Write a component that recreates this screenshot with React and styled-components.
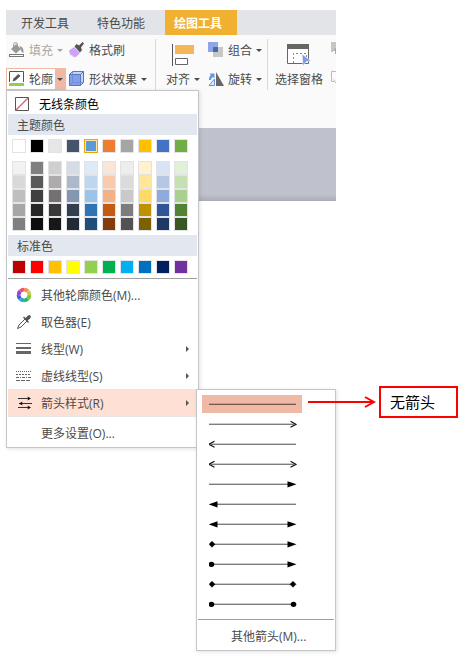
import React from 'react';
import styled, { createGlobalStyle, css } from 'styled-components';

const GlobalStyle = createGlobalStyle`
  *, *::before, *::after { box-sizing: border-box; }
  body {
    margin: 0;
    background: #fff;
    color: #4a4a4a;
    font: 12px/20px "Open Sans", "Noto Sans CJK SC", sans-serif;
  }
  button {
    margin: 0;
    padding: 0;
    border: 0;
    background: none;
    color: inherit;
    font: inherit;
    text-align: left;
    white-space: nowrap;
    cursor: pointer;
  }
  ul { margin: 0; padding: 0; list-style: none; }
  h2 { margin: 0; }
  svg { display: block; flex: none; }
`;

const Page = styled.main`
  min-height: 100vh;
  padding: 10px 128px 0 6px;
`;

const Tabs = styled.nav`
  display: flex;
  height: 25px;
  overflow: hidden;
  background: #e3e4e7;
`;

const Tab = styled.button`
  padding: 0 13px 0 15px;
  line-height: 27px;
  ${(p) => p.$active && css`
    margin-left: 7px;
    padding: 0 15px 0 9px;
    background: #f0b030;
    color: #fff;
    font-weight: 700;
  `}
`;

const Ribbon = styled.section`
  display: flex;
  height: 93px;
  padding-top: 4px;
  background: #fafafa;
`;

const ToolGrid = styled.div`
  display: grid;
  grid-template-columns: ${(p) => p.$columns};
  grid-template-rows: 22px 22px;
  row-gap: 7px;
  align-content: start;
`;

const Separator = styled.div`
  width: 1px;
  height: 51px;
  background: #d8d9dc;
`;

const Label = styled.span`
  display: block;
  padding-top: 2px;
`;

const Tool = styled.button`
  display: flex;
  align-items: center;
  gap: 4px;
  padding-left: 3px;
  color: ${(p) => (p.disabled ? '#a8a8a8' : '#4a4a4a')};
`;

const LargeTool = styled.button`
  display: grid;
  grid-template-rows: 24px 22px;
  align-content: start;
  justify-items: center;
  width: ${(p) => p.$width};
  padding: 5px 0 0 ${(p) => p.$indent || '0'};
`;

const LargeLabel = styled.span`
  display: flex;
  align-items: center;
  gap: 4px;
`;

const Caret = styled.span`
  border: 3px solid transparent;
  border-top-color: currentColor;
  border-bottom: 0;
`;

const Split = styled.div`
  position: relative;
  display: flex;
  width: 60px;
  border: 1px solid #f0b9a6;
  background: #fff;
`;

const SplitMain = styled.button`
  display: flex;
  flex: 1;
  align-items: center;
  gap: 4px;
  padding-left: 2px;
`;

const SplitCaret = styled.button`
  display: grid;
  place-items: center;
  width: 10px;
  background: #f0b9a6;
`;

const CutTools = styled.div`
  display: grid;
  flex: 1;
  grid-template-rows: 22px 22px;
  row-gap: 7px;
  align-content: start;
  align-items: center;
  justify-content: end;
`;

const Canvas = styled.div`
  height: 73px;
  border-bottom: 1px solid #a9abb6;
  background: linear-gradient(#bfc2cc 92%, #adafb9);
`;

const Popup = styled.div`
  position: absolute;
  z-index: 2;
  border: 1px solid #c5c6c8;
  background: #fff;
  box-shadow: 1px 1px 4px rgba(0, 0, 0, 0.12);
`;

const Menu = styled(Popup)`
  top: 21px;
  left: -1px;
  width: 193px;
  padding: 1px;
`;

const NoLine = styled.button`
  display: flex;
  align-items: center;
  gap: 10px;
  width: 100%;
  height: 22px;
  padding: 1px 0 0 7px;
  color: #000;
`;

const Heading = styled.h2`
  height: 21px;
  padding-left: 9px;
  background: #e3e7ef;
  font-size: 12px;
  font-weight: 400;
  line-height: 23px;
`;

const Swatches = styled.div`
  display: grid;
  grid-template-columns: repeat(10, 14px);
  column-gap: 4px;
  padding: 4px;
`;

const Swatch = styled.button`
  height: 14px;
  border: 1px solid #e2e3e7;
  background: ${(p) => p.$color};
  ${(p) => p.$selected && css`
    border-color: #f2a100;
    box-shadow: inset 0 0 0 1px #ffe5a0;
  `}
`;

const Rule = styled.div`
  height: 1px;
  margin-bottom: 2px;
  background: ${(p) => (p.$light ? '#e6e6e6' : '#a0a0a0')};
`;

const MenuRow = styled.li`
  position: relative;
`;

const MenuItem = styled.button`
  display: grid;
  grid-template-columns: 16px 1fr auto;
  column-gap: 9px;
  align-items: center;
  width: 100%;
  height: 27px;
  padding: 0 8px;
  background: ${(p) => (p.$active ? '#fee1d4' : 'none')};
`;

const SideCaret = styled.span`
  border: 3px solid transparent;
  border-left-color: #555;
  border-right: 0;
`;

const Submenu = styled(Popup)`
  top: 0;
  left: 100%;
  width: 140px;
  margin-left: -1px;
  padding: 5px 1px 1px;
`;

const ArrowList = styled.ul`
  display: grid;
  gap: 2px;
  padding: 0 32px 6px 4px;
`;

const ArrowRow = styled.li`
  position: relative;
`;

const ArrowButton = styled.button`
  display: block;
  width: 100%;
  height: 18px;
  padding-left: 7px;
  background: ${(p) => (p.$active ? '#f0b9a6' : 'none')};
`;

const MoreArrows = styled.button`
  width: 100%;
  height: 27px;
  padding-left: 33px;
`;

const Callout = styled.div`
  position: absolute;
  top: -9px;
  left: 100%;
  display: flex;
  align-items: center;
  gap: 3px;
  margin-left: 6px;
`;

const CalloutBox = styled.div`
  width: 79px;
  height: 32px;
  padding-left: 9px;
  border: 2px solid #f00;
  background: #fff;
  color: #000;
  font: 15px/28px "Noto Sans CJK SC", sans-serif;
`;

const THEME = ['#ffffff', '#000000', '#e7e6e6', '#44546a', '#5b9bd5', '#ed7d31', '#a5a5a5', '#ffc000', '#4472c4', '#70ad47'];
const SHADES = [
  ['#f2f2f2', '#7f7f7f', '#d0cece', '#d6dce5', '#deebf7', '#fbe5d6', '#ededed', '#fff2cc', '#dae3f3', '#e2f0d9'],
  ['#d9d9d9', '#595959', '#afabab', '#adb9ca', '#bdd7ee', '#f8cbad', '#dbdbdb', '#ffe699', '#b4c7e7', '#c5e0b4'],
  ['#bfbfbf', '#404040', '#767171', '#8497b0', '#9dc3e6', '#f4b183', '#c9c9c9', '#ffd966', '#8faadc', '#a9d18e'],
  ['#a6a6a6', '#262626', '#3b3838', '#333f50', '#2e75b6', '#c55a11', '#7c7c7c', '#bf9000', '#2f5597', '#548235'],
  ['#7f7f7f', '#0d0d0d', '#181717', '#222a35', '#1f4e79', '#843c0c', '#525252', '#7f6000', '#203864', '#385723'],
];
const STANDARD = ['#c00000', '#ff0000', '#ffc000', '#ffff00', '#92d050', '#00b050', '#00b0f0', '#0070c0', '#002060', '#7030a0'];

const ARROWS = [
  [null, null],
  [null, 'open'],
  ['open', null],
  ['open', 'open'],
  [null, 'solid'],
  ['solid', null],
  ['solid', 'solid'],
  ['diamond', 'solid'],
  ['dot', 'solid'],
  ['diamond', 'diamond'],
  ['dot', 'dot'],
];

function Cap({ kind }) {
  if (kind === 'open') return <path d="M81.500 6.300l5.500 3-5.500 3" fill="none" stroke="#111" strokeWidth="1.200" />;
  if (kind === 'solid') return <path d="M78.500 6.200l9 3.100-9 3.200z" fill="#000" />;
  if (kind === 'diamond') return <path d="M84 6.300l3 3-3 3-3-3z" fill="#000" stroke="#000" strokeWidth=".5" />;
  if (kind === 'dot') return <ellipse cx="84.500" cy="9.300" rx="2.800" ry="2.600" fill="#000" />;
  return null;
}

function ArrowLine({ start, end, dark }) {
  const from = start ? 2 : 0;
  const to = end ? 85 : 87;
  return (
    <svg width="88" height="18" viewBox="0 0 88 18" aria-hidden="true">
      <path d={`M${from} 8.500H${to}`} stroke={dark ? '#c89a8b' : '#ccc'} />
      <path d={`M${from} 9.500H${to}`} stroke={dark ? '#79564c' : '#7d7d7d'} />
      <g transform="matrix(-1 0 0 1 87 0)"><Cap kind={start} /></g>
      <Cap kind={end} />
    </svg>
  );
}

const FillIcon = () => (
  <svg width="16" height="16" viewBox="0 0 16 16" aria-hidden="true">
    <path d="M7 2l5 5-5 4.500L2 7z" fill="#999" />
    <path d="M4.500 5V2.500Q4.500.700 6.500.700T8.500 2.500V5" fill="none" stroke="#999" />
    <path d="M10.500 4q4.500.5 4 7-2.500-1-3-4z" fill="#999" />
    <rect x=".5" y="12.500" width="14" height="2" fill="#fff" stroke="#777" />
  </svg>
);

const OutlineIcon = () => (
  <svg width="16" height="16" viewBox="0 0 16 16" aria-hidden="true">
    <path d="M.500 11V.500h14V11" fill="none" stroke="#555" />
    <path d="M3.500 10.500l1-3 5-4.500 2 2L6.500 9.500z" fill="#555" />
    <path d="M0 12h15v3H0z" fill="#8fd14f" />
  </svg>
);

const BrushIcon = () => (
  <svg width="16" height="16" viewBox="0 0 16 16" aria-hidden="true">
    <path d="M0 8.500L5 5l6 6-4.500 4.500-1.500-1-1 .5-1-2-1.500.5z" fill="#cda4f4" />
    <path d="M5.500 4.500L7.500 2l2.500 1.500L13.500 0 15 1.500 12 5.500l1 2.500-2 2.500z" fill="#555" />
  </svg>
);

const CubeIcon = () => (
  <svg width="16" height="16" viewBox="0 0 16 16" aria-hidden="true">
    <path d="M.500 3.500l3-3h11v11l-3 3H.500z" fill="#c5d3f8" stroke="#5877ba" />
    <path d="M1 4h10v10H1z" fill="#839fea" />
    <path d="M.500 3.500h11v11M11.500 3.500l3-3" fill="none" stroke="#5877ba" />
    <path d="M3.500 1v10.500H14M3.500 11.500l-3 3" fill="none" stroke="#6f8fdc" />
  </svg>
);

const AlignIcon = () => (
  <svg width="24" height="22" viewBox="0 0 24 22" aria-hidden="true">
    <path d="M1.500 0v22" stroke="#555" />
    <path d="M4 1h19v9H4z" fill="#f4b757" />
    <path d="M4.500 14.500h12v6h-12z" fill="#fff" stroke="#666" />
  </svg>
);

const GroupIcon = () => (
  <svg width="16" height="16" viewBox="0 0 16 16" aria-hidden="true">
    <path d="M5 5h10v10H5z" fill="#c8c8c8" />
    <path d="M0 0h10v10H0z" fill="#8fa5e8" />
    <path d="M5 5h5v5H5z" fill="#4968ad" />
  </svg>
);

const RotateIcon = () => (
  <svg width="16" height="16" viewBox="0 0 16 16" aria-hidden="true">
    <path d="M8 1l8 14H8z" fill="#666" />
    <path d="M6.500 8v6.500H1z" fill="#dfeafc" stroke="#6293e5" />
    <path d="M1 9q0-4 2-5L1.500 2.500H6.500v5L5 6Q3 7 3 9z" fill="#5f97ee" />
  </svg>
);

const PaneIcon = () => (
  <svg width="24" height="22" viewBox="0 0 24 22" aria-hidden="true">
    <path d="M.500.500h21v19H.500z" fill="#fff" stroke="#666" />
    <path d="M0 0h22v5H0z" fill="#666" />
    <path d="M6.500 19V9.500h13V17" fill="none" stroke="#888" strokeDasharray="2 2" />
    <path d="M15 10l9 7-4.500.5L16 22z" fill="#839be5" stroke="#fff" strokeWidth=".5" />
  </svg>
);

const CutTopIcon = () => (
  <svg width="5" height="16" viewBox="0 0 5 16" aria-hidden="true">
    <path d="M0 0h5v5L2 8v2H0z" fill="#c6c6c6" />
    <path d="M1.500 8.500L5 5v7H4V9z" fill="#aaa" />
  </svg>
);

const CutBottomIcon = () => (
  <svg width="5" height="16" viewBox="0 0 5 16" aria-hidden="true">
    <path d="M5 .500H.500v10H3M2.500 8.500L5 12" fill="none" stroke="#bbb" />
  </svg>
);

const NoLineIcon = () => (
  <svg width="14" height="14" viewBox="0 0 14 14" aria-hidden="true">
    <path d="M.500.500h13v13H.500z" fill="#fff" stroke="#555" />
    <path d="M1 13L13 1" stroke="#df5b6c" strokeWidth="1.300" />
  </svg>
);

const WHEEL = ['#f0904a', '#c8cc3c', '#7cc63f', '#35b06b', '#22a8d8', '#3f67d0', '#9a3fd5', '#ee4a7a'];
const WheelIcon = () => (
  <svg width="16" height="16" viewBox="0 0 16 16" aria-hidden="true">
    {WHEEL.map((c, i) => (
      <path key={c} d="M8.200.800q3 0 5 2L10.300 5.400 7.800 4.200z" fill={c} transform={`rotate(${i * 45} 8 8)`} />
    ))}
  </svg>
);

const DropperIcon = () => (
  <svg width="16" height="16" viewBox="0 0 16 16" aria-hidden="true">
    <path d="M1.500 14.500L3 11l6-6 2 2-6 6z" fill="#fff" stroke="#555" />
    <path d="M7 3.500l1-1L9.500 4l2.500-2.500q1.500-1 2.500.2t-.2 2.500L11.800 6.500l1.200 1.500-1 1z" fill="#555" />
  </svg>
);

const WeightIcon = () => (
  <svg width="16" height="16" viewBox="0 0 16 16" aria-hidden="true">
    <path d="M0 2h15v1H0zM0 6h15v2H0zM0 10h15v3H0z" fill="#666" />
  </svg>
);

const DashIcon = () => (
  <svg width="16" height="16" viewBox="0 0 16 16" aria-hidden="true">
    <path d="M0 3.500h15" stroke="#666" strokeDasharray="1 1" />
    <path d="M0 6.500h15" stroke="#666" strokeDasharray="2 1" />
    <path d="M0 9.500h15" stroke="#666" strokeDasharray="3 1 1 1" />
    <path d="M0 12.500h15" stroke="#666" strokeDasharray="4 1" />
  </svg>
);

const ArrowsIcon = () => (
  <svg width="16" height="16" viewBox="0 0 16 16" aria-hidden="true">
    <path d="M2 3.500h12M3 8.500h13M2 12.500h12" stroke="#333" />
    <path d="M11.500 1.500l3.500 2-3.500 2 .5-2zM6.500 6.500L3 8.500l3.500 2-.5-2zM11.500 10.500l3.500 2-3.500 2 .5-2z" fill="#111" />
  </svg>
);

function SwatchGrid({ colors, selected }) {
  return (
    <Swatches>
      {colors.map((c, i) => <Swatch key={i} $color={c} $selected={i === selected} aria-label={c} />)}
    </Swatches>
  );
}

function ArrowSubmenu() {
  return (
    <Submenu>
      <ArrowList>
        {ARROWS.map(([start, end], i) => (
          <ArrowRow key={i}>
            <ArrowButton $active={i === 0} aria-label={`${start || '–'} ${end || '–'}`}>
              <ArrowLine start={start} end={end} dark={i === 0} />
            </ArrowButton>
            {i === 0 && (
              <Callout>
                <svg width="68" height="14" viewBox="0 0 68 14" aria-hidden="true">
                  <path d="M0 7h66M57 2l9 5-9 5" fill="none" stroke="#f00" strokeWidth="2" />
                </svg>
                <CalloutBox>无箭头</CalloutBox>
              </Callout>
            )}
          </ArrowRow>
        ))}
      </ArrowList>
      <Rule />
      <MoreArrows><Label>其他箭头(M)...</Label></MoreArrows>
    </Submenu>
  );
}

const ITEMS = [
  { label: '其他轮廓颜色(M)...', Icon: WheelIcon },
  { label: '取色器(E)', Icon: DropperIcon },
  { label: '线型(W)', Icon: WeightIcon, more: true },
  { label: '虚线线型(S)', Icon: DashIcon, more: true },
  { label: '箭头样式(R)', Icon: ArrowsIcon, more: true, open: true },
];

function OutlineMenu() {
  return (
    <Menu>
      <NoLine><NoLineIcon /><Label>无线条颜色</Label></NoLine>
      <Heading>主题颜色</Heading>
      <SwatchGrid colors={THEME} selected={4} />
      <SwatchGrid colors={SHADES.flat()} />
      <Heading>标准色</Heading>
      <SwatchGrid colors={STANDARD} />
      <Rule />
      <ul>
        {ITEMS.map(({ label, Icon, more, open }) => (
          <MenuRow key={label}>
            <MenuItem $active={open}>
              <Icon />
              <Label>{label}</Label>
              {more && <SideCaret />}
            </MenuItem>
            {open && <ArrowSubmenu />}
          </MenuRow>
        ))}
      </ul>
      <Rule $light />
      <MenuItem><span /><Label>更多设置(O)...</Label></MenuItem>
    </Menu>
  );
}

export default function App() {
  return (
    <Page>
      <GlobalStyle />
      <Tabs>
        <Tab>开发工具</Tab>
        <Tab>特色功能</Tab>
        <Tab $active>绘图工具</Tab>
      </Tabs>
      <Ribbon>
        <ToolGrid $columns="60px 89px">
          <Tool disabled><FillIcon /><Label>填充</Label><Caret /></Tool>
          <Tool><BrushIcon /><Label>格式刷</Label></Tool>
          <Split>
            <SplitMain><OutlineIcon /><Label>轮廓</Label></SplitMain>
            <SplitCaret aria-label="轮廓"><Caret /></SplitCaret>
            <OutlineMenu />
          </Split>
          <Tool><CubeIcon /><Label>形状效果</Label><Caret /></Tool>
        </ToolGrid>
        <Separator />
        <LargeTool $width="49px" $indent="5px">
          <AlignIcon />
          <LargeLabel><Label>对齐</Label><Caret /></LargeLabel>
        </LargeTool>
        <ToolGrid $columns="62px">
          <Tool><GroupIcon /><Label>组合</Label><Caret /></Tool>
          <Tool><RotateIcon /><Label>旋转</Label><Caret /></Tool>
        </ToolGrid>
        <Separator />
        <LargeTool $width="62px">
          <PaneIcon />
          <LargeLabel><Label>选择窗格</Label></LargeLabel>
        </LargeTool>
        <CutTools>
          <CutTopIcon />
          <CutBottomIcon />
        </CutTools>
      </Ribbon>
      <Canvas />
    </Page>
  );
}
